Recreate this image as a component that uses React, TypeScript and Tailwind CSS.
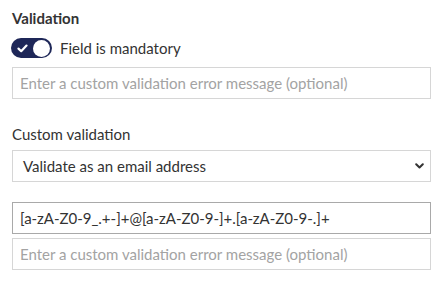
function Toggle() {
  return (
    <div className="flex h-5 w-[41px] items-center justify-between rounded-full bg-[#1e2758] pl-[6px] pr-[2px]">
      <svg width="11" height="9" viewBox="0 0 11 9" fill="none">
        <path
          d="M1.5 4.6 L4.2 7.2 L9.5 1.6"
          stroke="#fff"
          strokeWidth="2.2"
          strokeLinecap="round"
          strokeLinejoin="round"
        />
      </svg>
      <span className="h-[17px] w-[17px] rounded-full bg-white" />
    </div>
  )
}

export default function App() {
  return (
    <div
      className="h-[294px] w-[448px] bg-white pl-3 pt-2 text-[15px] text-[#333]"
      style={{ fontFamily: 'Lato, "Open Sans", sans-serif' }}
    >
      <div className="w-[419px]">
        {/* Validation */}
        <h3 className="text-[15px] font-bold leading-5 text-[#333]">
          Validation
        </h3>
        <div className="mt-[10px] flex h-5 items-center gap-2">
          <div className="-ml-px">
            <Toggle />
          </div>
          <span className="leading-5">Field is mandatory</span>
        </div>
        <input
          className="mt-[9px] block h-8 w-full border border-[#d6d6d6] bg-white px-[7px] text-[15px] text-[#333] outline-none placeholder:text-[#a3a3a3]"
          placeholder="Enter a custom validation error message (optional)"
        />

        {/* Custom validation */}
        <div className="mt-[25px] leading-5">Custom validation</div>
        <div className="mt-[6px] flex h-8 w-full items-center border border-[#d6d6d6] bg-white pl-[10px] pr-[6px]">
          <span className="flex-1">Validate as an email address</span>
          <svg width="9" height="6" viewBox="0 0 9 6" fill="none">
            <path
              d="M1.2 1.2 L4.5 4.5 L7.8 1.2"
              stroke="#333"
              strokeWidth="2"
              strokeLinecap="round"
              strokeLinejoin="round"
            />
          </svg>
        </div>

        <input
          className="mt-5 block h-8 w-full border border-[#a9a9a9] bg-white px-[7px] text-[15px] text-[#333] outline-none"
          defaultValue="[a-zA-Z0-9_.+-]+@[a-zA-Z0-9-]+.[a-zA-Z0-9-.]+"
        />
        <input
          className="mt-1 block h-8 w-full border border-[#d6d6d6] bg-white px-[7px] text-[15px] text-[#333] outline-none placeholder:text-[#a3a3a3]"
          placeholder="Enter a custom validation error message (optional)"
        />
      </div>
    </div>
  )
}
